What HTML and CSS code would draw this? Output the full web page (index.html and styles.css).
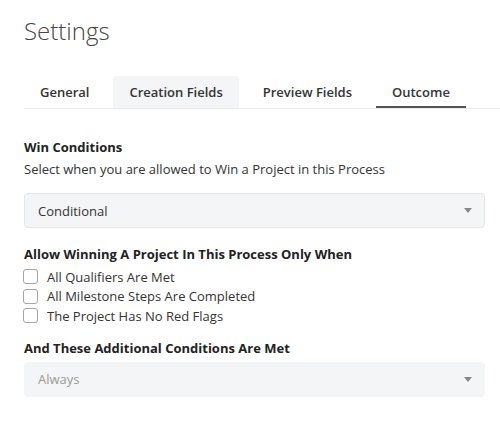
FILE: index.html
```html
<!DOCTYPE html>
<html>
<head>
<meta charset="utf-8">
<link rel="stylesheet" href="styles.css">
</head>
<body>
<div class="page">
  <h1 class="title">Settings</h1>
  <div class="tabs">
    <div class="tab">General</div>
    <div class="tab tab-hover">Creation Fields</div>
    <div class="tab">Preview Fields</div>
    <div class="tab tab-active">Outcome</div>
  </div>
  <div class="form">
    <div class="label">Win Conditions</div>
    <div class="help">Select when you are allowed to Win a Project in this Process</div>
    <div class="select">
      <span class="select-value">Conditional</span>
      <span class="caret"></span>
    </div>
    <div class="label label-2">Allow Winning A Project In This Process Only When</div>
    <div class="checks">
      <label class="check"><span class="box"></span>All Qualifiers Are Met</label>
      <label class="check"><span class="box"></span>All Milestone Steps Are Completed</label>
      <label class="check"><span class="box"></span>The Project Has No Red Flags</label>
    </div>
    <div class="label label-3">And These Additional Conditions Are Met</div>
    <div class="select select-disabled">
      <span class="select-value">Always</span>
      <span class="caret"></span>
    </div>
  </div>
</div>
</body>
</html>
```
FILE: styles.css
```css
html, body {
  margin: 0;
  padding: 0;
  background: #fff;
}
body {
  font-family: "Open Sans", "Liberation Sans", sans-serif;
  color: #333;
  width: 500px;
  height: 424px;
  overflow: hidden;
}
.page {
  padding: 15px 0 0 24px;
}
.title {
  margin: 0;
  font-size: 24px;
  line-height: 32px;
  font-weight: 300;
  color: #444;
}
.tabs {
  display: flex;
  gap: 8px;
  margin-top: 29px;
  border-bottom: 1px solid #ececec;
  height: 32px;
}
.tab {
  padding: 0 16px;
  font-size: 13px;
  font-weight: 600;
  line-height: 32px;
  color: #333;
  border-radius: 4px 4px 0 0;
}
.tab-hover {
  background: #f4f5f6;
}
.tab-active {
  border-bottom: 2px solid #555;
  height: 32px;
  box-sizing: border-box;
  line-height: 32px;
  margin-bottom: -1px;
}
.form {
  padding-right: 15px;
  padding-top: 28px;
}
.label {
  font-size: 13px;
  font-weight: 700;
  line-height: 20px;
  color: #222;
}
.help {
  font-size: 13px;
  line-height: 20px;
  margin-top: 2px;
  color: #333;
}
.select {
  display: flex;
  align-items: center;
  justify-content: space-between;
  height: 35px;
  box-sizing: border-box;
  margin-top: 14px;
  padding: 0 12px 0 13px;
  background: #f4f5f6;
  border: 1px solid #e4e5e7;
  border-radius: 4px;
  font-size: 13px;
  color: #333;
}
.caret {
  width: 0;
  height: 0;
  border-left: 4px solid transparent;
  border-right: 4px solid transparent;
  border-top: 5px solid #888;
}
.label-2 {
  margin-top: 16px;
}
.checks {
  display: flex;
  flex-direction: column;
  margin-top: 3px;
}
.check {
  display: flex;
  align-items: center;
  gap: 9px;
  height: 19.5px;
  font-size: 13px;
  color: #333;
}
.box {
  width: 15px;
  height: 15px;
  box-sizing: border-box;
  border: 1px solid #a5a5a5;
  border-radius: 3px;
  background: #fff;
  margin-left: -1px;
}
.label-3 {
  margin-top: 12px;
}
.select-disabled {
  margin-top: 4px;
  border-color: #f4f5f6;
  color: #999;
}
```
